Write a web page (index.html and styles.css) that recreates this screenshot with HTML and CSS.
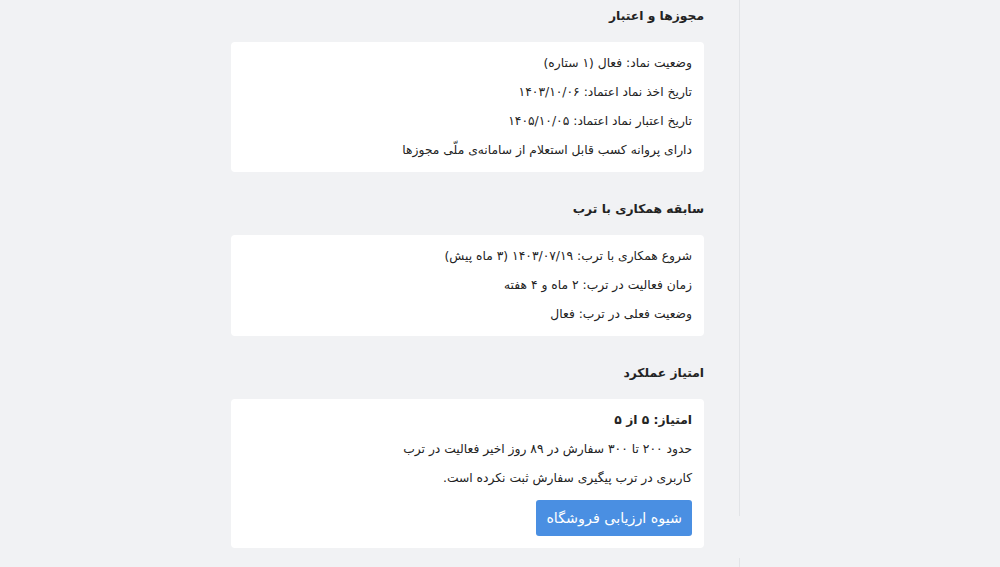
FILE: index.html
```html
<!DOCTYPE html>
<html lang="fa" dir="rtl">
<head>
    <meta charset="UTF-8">
    <meta name="viewport" content="width=device-width, initial-scale=1.0">
    <title>اطلاعات فروشگاه</title>
    <link rel="stylesheet" href="styles.css">
</head>
<body>
    <div class="page">
        <aside class="sidebar">
            <div class="side-block side-top"></div>
            <div class="side-block side-bottom"></div>
        </aside>
        <main class="content">
            <section class="section">
                <h2 class="section-title">مجوزها و اعتبار</h2>
                <div class="card">
                    <p>وضعیت نماد: فعال (۱ ستاره)</p>
                    <p>تاریخ اخذ نماد اعتماد: ۱۴۰۳/۱۰/۰۶</p>
                    <p>تاریخ اعتبار نماد اعتماد: ۱۴۰۵/۱۰/۰۵</p>
                    <p>دارای پروانه کسب قابل استعلام از سامانه‌ی ملّی مجوزها</p>
                </div>
            </section>
            <section class="section">
                <h2 class="section-title">سابقه همکاری با ترب</h2>
                <div class="card">
                    <p>شروع همکاری با ترب: ۱۴۰۳/۰۷/۱۹ (۳ ماه پیش)</p>
                    <p>زمان فعالیت در ترب: ۲ ماه و ۴ هفته</p>
                    <p>وضعیت فعلی در ترب: فعال</p>
                </div>
            </section>
            <section class="section">
                <h2 class="section-title">امتیاز عملکرد</h2>
                <div class="card">
                    <p class="score">امتیاز: ۵ از ۵</p>
                    <p>حدود ۲۰۰ تا ۳۰۰ سفارش در ۸۹ روز اخیر فعالیت در ترب</p>
                    <p>کاربری در ترب پیگیری سفارش ثبت نکرده است.</p>
                    <div class="actions">
                        <button class="btn">شیوه ارزیابی فروشگاه</button>
                    </div>
                </div>
            </section>
        </main>
    </div>
</body>
</html>
```

FILE: styles.css
```css
* {
    margin: 0;
    padding: 0;
    box-sizing: border-box;
    font-family: 'DejaVu Sans', 'Noto Sans', sans-serif;
}

body {
    background-color: #f1f2f4;
    color: #232323;
    overflow: hidden;
}

.page {
    display: flex;
    gap: 35px;
    height: 567px;
}

.sidebar {
    width: 261px;
    display: flex;
    flex-direction: column;
    gap: 42px;
}

.side-block {
    border-left: 1px solid #e2e4e7;
}

.side-top {
    height: 516px;
}

.side-bottom {
    flex: 1;
}

.content {
    width: 473px;
    padding-top: 6px;
    display: flex;
    flex-direction: column;
    gap: 27px;
}

.section-title {
    font-size: 12.3px;
    font-weight: bold;
    line-height: 20px;
    margin-bottom: 16px;
}

.card {
    background-color: #fff;
    border-radius: 4px;
    padding: 11px 12px 12px;
    display: flex;
    flex-direction: column;
    gap: 9px;
}

.card p {
    font-size: 12.3px;
    line-height: 20px;
}

.card .score {
    font-weight: bold;
}

.actions {
    display: flex;
    margin-top: 3px;
}

.btn {
    background-color: #4a8fe2;
    color: #fff;
    border: none;
    border-radius: 3px;
    font-size: 14.3px;
    height: 36px;
    padding: 0 10px;
    cursor: pointer;
}
```
